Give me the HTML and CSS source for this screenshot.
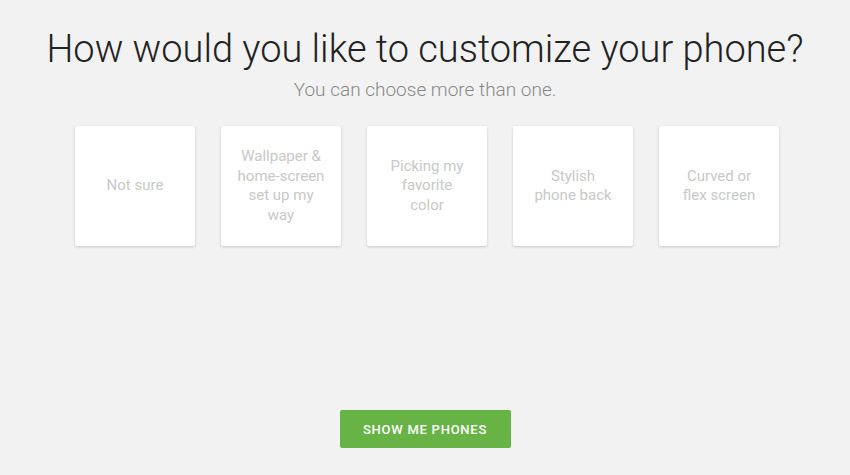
FILE: index.html
```html
<!doctype html>
<html>
<head>
<title>Customize your phone</title>
<meta charset="utf-8" />
<link rel="stylesheet" href="styles.css">
</head>

<body>
<div class="quiz">
	<h1 class="quiz-title">How would you like to customize your phone?</h1>
	<p class="quiz-sub">You can choose more than one.</p>
	<ul class="options">
		<li class="option">Not sure</li>
		<li class="option">Wallpaper &amp; home-screen set up my way</li>
		<li class="option">Picking my favorite color</li>
		<li class="option">Stylish phone back</li>
		<li class="option">Curved or flex screen</li>
	</ul>
	<div class="actions">
		<button class="btn-show" type="button">Show me phones</button>
	</div>
</div>
</body>
</html>
```

FILE: styles.css
```css
body { margin: 0; background: #f2f2f2; font-family: Roboto, 'Liberation Sans', sans-serif; }
.quiz { display: flex; flex-direction: column; align-items: center; padding-top: 24px; }
.quiz-title { margin: 0; font-size: 38px; line-height: 50px; font-weight: 300; color: #222; }
.quiz-sub { margin: 4px 0 0; font-size: 19px; line-height: 24px; font-weight: 300; color: #888; }
.options { display: flex; gap: 26px; list-style: none; padding: 0; margin: 24px 0 0 4px; }
.option { width: 120px; height: 120px; box-sizing: border-box; padding: 0 16.5px; background: #fff; border-radius: 2px; box-shadow: 0 1px 3px rgba(0,0,0,0.18); display: flex; align-items: center; justify-content: center; text-align: center; font-size: 15px; line-height: 19.5px; color: #c8c8c8; }
.actions { margin-top: 164px; }
.btn-show { width: 171px; height: 38px; border: 0; border-radius: 2px; background: #67b346; color: #fff; font-family: Roboto, 'Liberation Sans', sans-serif; font-size: 13px; font-weight: 500; letter-spacing: 0.75px; text-transform: uppercase; }
```
